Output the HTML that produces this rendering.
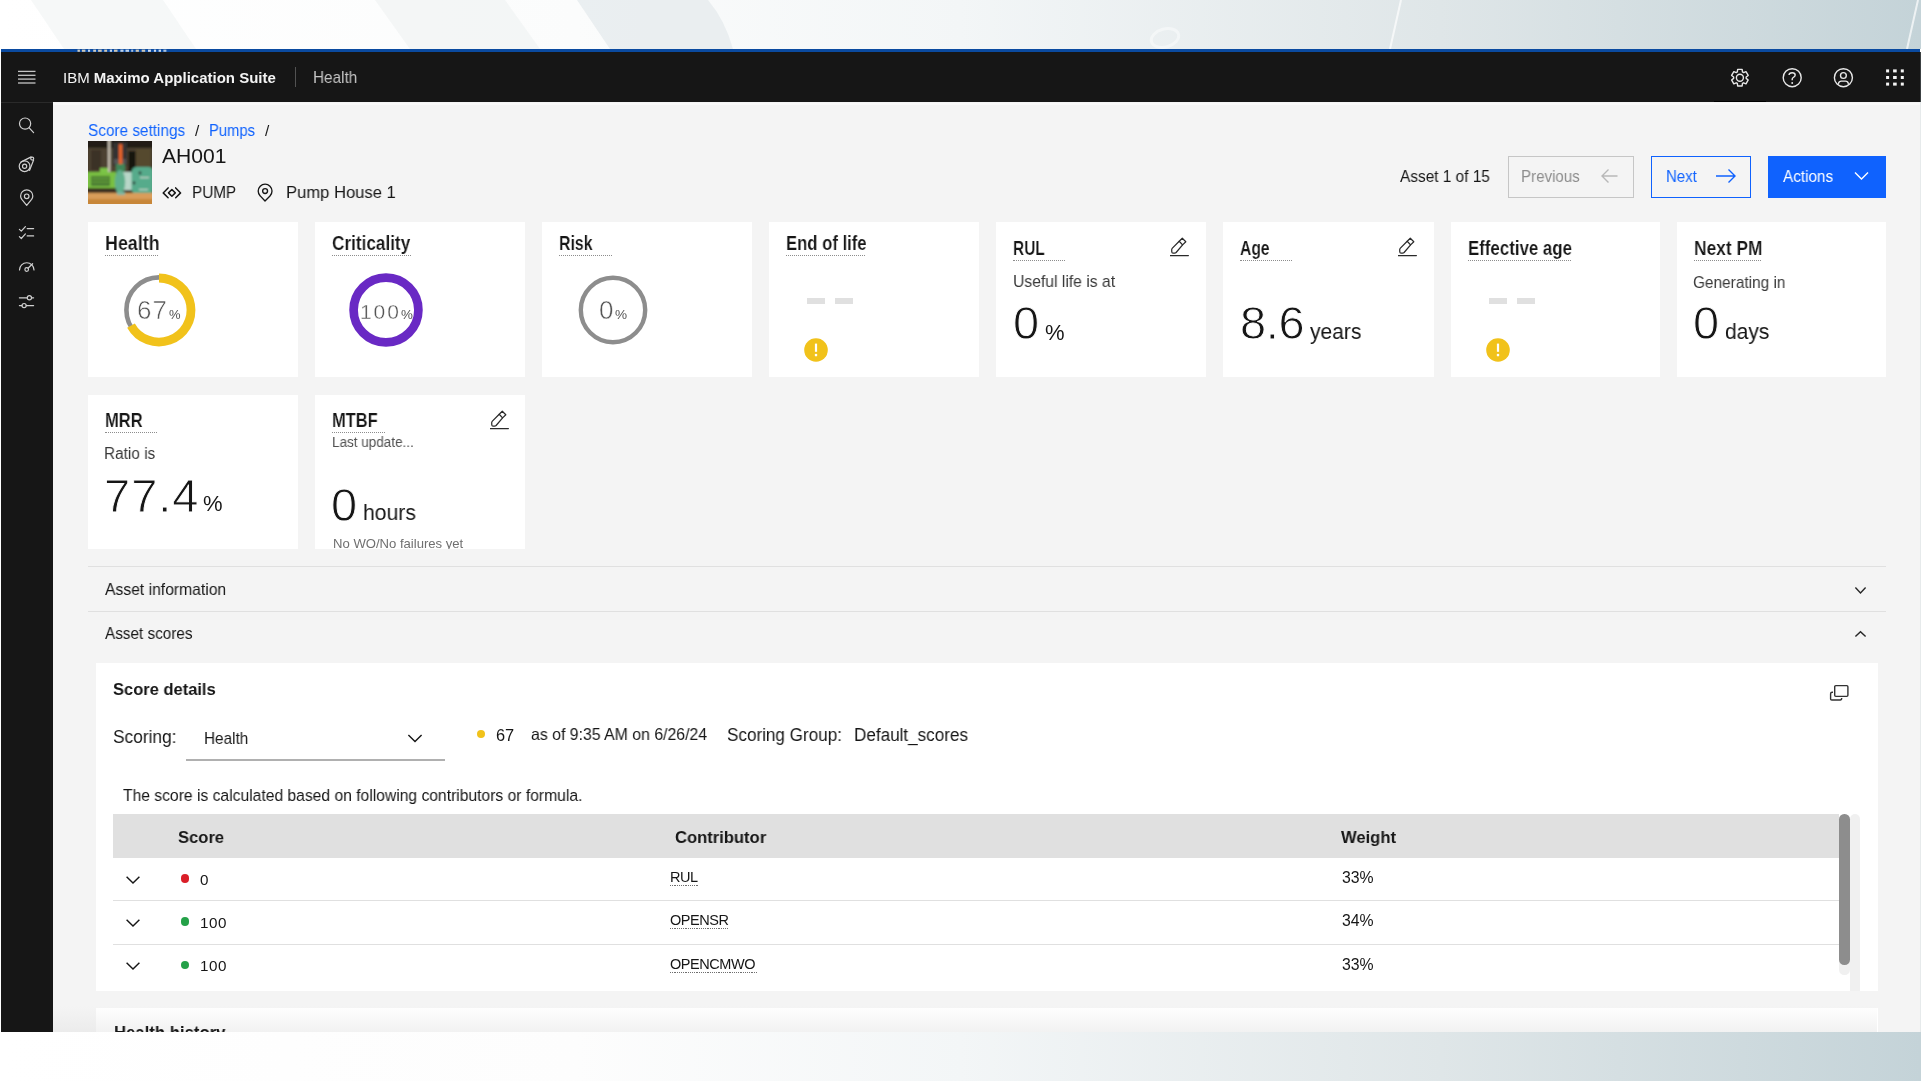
<!DOCTYPE html>
<html><head><meta charset="utf-8">
<style>
html,body{margin:0;padding:0;}
body{width:1921px;height:1081px;overflow:hidden;position:relative;background:#fff;font-family:"Liberation Sans", sans-serif;}
.t{position:absolute;line-height:1;white-space:pre;will-change:transform;}
.r{position:absolute;}
</style></head><body>
<svg class="r" style="left:0;top:0" width="1921" height="49" viewBox="0 0 1921 49">
<defs><linearGradient id="tg" x1="0" x2="1" y1="0" y2="0">
<stop offset="0" stop-color="#ffffff"/><stop offset="0.3" stop-color="#fbfcfc"/><stop offset="0.5" stop-color="#f3f6f7"/><stop offset="0.75" stop-color="#dfe6e8"/><stop offset="1" stop-color="#c4d3d8"/></linearGradient></defs>
<rect width="1921" height="49" fill="url(#tg)"/>
<polygon points="31,0 163,0 196,49 64,49" fill="#eef2f3" opacity="0.55"/>
<polygon points="375,0 505,0 540,49 410,49" fill="#eef1f2" opacity="0.6"/>
<path d="M577,0 L708,0 Q725,20 733,49 L610,49 Z" fill="#e6ebed" opacity="0.8"/>
<line x1="1401" y1="0" x2="1390" y2="49" stroke="#ffffff" stroke-width="2" opacity="0.7"/>
<line x1="1918" y1="0" x2="1907" y2="49" stroke="#ffffff" stroke-width="2" opacity="0.7"/>
<ellipse cx="1165" cy="38" rx="14" ry="9" fill="none" stroke="#ffffff" stroke-width="3" opacity="0.45" transform="rotate(-15 1165 38)"/>
</svg>
<div class="r" style="left:1px;top:49px;width:1919px;height:3px;background:#0a4aa0;"></div>
<svg class="r" style="left:0;top:49px" width="180" height="3"><rect x="77.5" y="0.6" width="2.4" height="2.2" fill="#f2e2c4" opacity="0.85"/><rect x="81.9" y="0.6" width="3.5" height="2.2" fill="#f0dcb8" opacity="0.85"/><rect x="88.0" y="0.6" width="2.1" height="2.2" fill="#dfeaf5" opacity="0.85"/><rect x="93.2" y="0.6" width="2.8" height="2.2" fill="#f2e2c4" opacity="0.85"/><rect x="98.1" y="0.6" width="3.6" height="2.2" fill="#f0dcb8" opacity="0.85"/><rect x="104.2" y="0.6" width="2.9" height="2.2" fill="#f0dcb8" opacity="0.85"/><rect x="109.8" y="0.6" width="2.2" height="2.2" fill="#e6eef6" opacity="0.85"/><rect x="114.0" y="0.6" width="3.5" height="2.2" fill="#f0dcb8" opacity="0.85"/><rect x="120.4" y="0.6" width="3.1" height="2.2" fill="#dfeaf5" opacity="0.85"/><rect x="125.5" y="0.6" width="3.5" height="2.2" fill="#dfeaf5" opacity="0.85"/><rect x="131.2" y="0.6" width="2.0" height="2.2" fill="#c8d6e6" opacity="0.85"/><rect x="135.7" y="0.6" width="3.2" height="2.2" fill="#f0dcb8" opacity="0.85"/><rect x="141.7" y="0.6" width="3.5" height="2.2" fill="#f0dcb8" opacity="0.85"/><rect x="148.0" y="0.6" width="2.9" height="2.2" fill="#f4f6f8" opacity="0.85"/><rect x="153.9" y="0.6" width="2.2" height="2.2" fill="#f4f6f8" opacity="0.85"/><rect x="158.6" y="0.6" width="2.4" height="2.2" fill="#e6eef6" opacity="0.85"/><rect x="163.4" y="0.6" width="3.0" height="2.2" fill="#c8d6e6" opacity="0.85"/></svg>
<div class="r" style="left:1px;top:52px;width:1919px;height:50px;background:#161616;"></div>
<div class="r" style="left:1px;top:102px;width:52.4px;height:930px;background:#161616;"></div>
<div class="r" style="left:1px;top:102px;width:52px;height:1px;background:#2a2a2a;"></div>
<div class="r" style="left:53.4px;top:102px;width:1866.6px;height:930px;background:#f4f4f4;"></div>
<div class="r" style="left:53px;top:103px;width:1867px;height:2px;background:#f9f9f9;"></div>
<div class="r" style="left:1920px;top:52px;width:1px;height:50px;background:#3c4143;"></div>
<div class="r" style="left:1920px;top:102px;width:1px;height:930px;background:#e6eaeb;"></div>
<svg class="r" style="left:0;top:52px" width="60" height="50"><g stroke="#c6c6c6" stroke-width="1.3"><line x1="18" y1="19.4" x2="35.5" y2="19.4"/><line x1="18" y1="23.3" x2="35.5" y2="23.3"/><line x1="18" y1="27.1" x2="35.5" y2="27.1"/><line x1="18" y1="31" x2="35.5" y2="31"/></g></svg>
<div class="t" style="left:63.4px;top:70.10px;font-size:15px;color:#f4f4f4">IBM <b style="font-weight:700">Maximo Application Suite</b></div>
<div class="r" style="left:295px;top:67px;width:1px;height:20px;background:#525252;"></div>
<div class="t" style="left:313.40px;top:69px;font-size:16.37px;color:#c6c6c6;font-weight:400;transform:scaleX(0.9346);transform-origin:0 0;">Health</div>
<svg class="r" style="left:1700px;top:52px" width="221" height="50"><g fill="none" stroke="#e8e8e8" stroke-width="1.4" stroke-linejoin="round"><path d="M37.34,19.94 L37.67,17.39 L42.13,17.39 L42.46,19.94 L43.60,20.60 L45.98,19.62 L48.21,23.47 L46.17,25.04 L46.17,26.36 L48.21,27.93 L45.98,31.78 L43.60,30.80 L42.46,31.46 L42.13,34.01 L37.67,34.01 L37.34,31.46 L36.20,30.80 L33.82,31.78 L31.59,27.93 L33.63,26.36 L33.63,25.04 L31.59,23.47 L33.82,19.62 L36.20,20.60Z"/><circle cx="39.9" cy="25.7" r="3.5"/><circle cx="92.2" cy="25.7" r="9.0"/><path d="M89.0,23.0 Q89.1,20.7 92.2,20.7 Q95.2,20.7 95.2,23.1 Q95.2,24.7 93.1,25.6 Q92.2,26.0 92.2,27.3 L92.2,28.2"/><circle cx="143.4" cy="25.7" r="9.0"/><circle cx="143.4" cy="23.5" r="2.9"/><path d="M138.2,32.4 L138.5,31.4 Q139.0,29.1 141.3,29.1 L145.5,29.1 Q147.8,29.1 148.3,31.4 L148.6,32.4"/></g><circle cx="92.2" cy="31.0" r="0.95" fill="#e8e8e8"/><g fill="#f4f4f4"><rect x="186.1" y="17.4" width="3" height="3"/><rect x="186.1" y="24.0" width="3" height="3"/><rect x="186.1" y="30.6" width="3" height="3"/><rect x="193.1" y="17.4" width="3.6" height="3"/><rect x="193.1" y="24.0" width="3.6" height="3"/><rect x="193.1" y="30.6" width="3.6" height="3"/><rect x="200.8" y="17.4" width="3" height="3"/><rect x="200.8" y="24.0" width="3" height="3"/><rect x="200.8" y="30.6" width="3" height="3"/></g></svg>
<div class="r" style="left:1714px;top:101px;width:52px;height:1px;background:#000000;"></div>
<svg class="r" style="left:0;top:102px" width="53" height="220"><g fill="none" stroke="#d0d0d0" stroke-width="1.2" stroke-linecap="round" stroke-linejoin="round"><circle cx="25.1" cy="21.6" r="5.6"/><line x1="29.2" y1="25.8" x2="33.6" y2="30.6"/><circle cx="24.6" cy="64.2" r="5.4"/><circle cx="24.6" cy="64.2" r="2.1"/><circle cx="32.2" cy="56.6" r="1.5"/><path d="M21.2,59.9 L31.2,54.9 M29.6,68.4 L33.6,58"/><path d="M26.7,103.3 L21.8,97.4 Q20.6,95.8 20.6,94 A6.1,6.1 0 0 1 32.8,94 Q32.8,95.8 31.6,97.4 Z"/><circle cx="26.7" cy="94.3" r="2.3"/><path d="M19.4,127.3 L21.3,129.2 L25.4,124.6 M19.4,134.6 L21.3,136.5 L25.4,131.9"/><line x1="27.2" y1="126.6" x2="33.6" y2="126.6"/><line x1="27.2" y1="133.9" x2="33.6" y2="133.9"/><path d="M19.5,168 A7.25,7.25 0 0 1 34,168"/><circle cx="26.7" cy="167.5" r="1.8"/><line x1="28" y1="166.2" x2="32.6" y2="161.7"/><line x1="19.4" y1="195.8" x2="27.2" y2="195.8"/><line x1="31.6" y1="195.8" x2="33.6" y2="195.8"/><circle cx="29.4" cy="195.8" r="2.1"/><line x1="19.4" y1="203.6" x2="21.9" y2="203.6"/><line x1="26.3" y1="203.6" x2="33.6" y2="203.6"/><circle cx="24.1" cy="203.6" r="2.1"/></g></svg>
<div class="t" style="left:88.00px;top:122px;font-size:16.42px;color:#0f62fe;font-weight:400;transform:scaleX(0.9346);transform-origin:0 0;">Score settings</div>
<div class="t" style="left:194.50px;top:123px;font-size:15.35px;color:#161616;font-weight:400;">/</div>
<div class="t" style="left:209.20px;top:123px;font-size:15.84px;color:#0f62fe;font-weight:400;transform:scaleX(0.9346);transform-origin:0 0;">Pumps</div>
<div class="t" style="left:265.30px;top:123px;font-size:15.35px;color:#161616;font-weight:400;">/</div>
<div class="t" style="left:162.30px;top:146px;font-size:20.05px;color:#161616;font-weight:400;transform:scaleX(1.0526);transform-origin:0 0;">AH001</div>
<svg class="r" style="left:87.8px;top:140.5px" width="64" height="63" viewBox="0 0 64 63"><defs><filter id="pb" x="0" y="0" width="1" height="1"><feGaussianBlur stdDeviation="0.9"/></filter><clipPath id="pc"><rect width="64" height="63"/></clipPath></defs><rect width="64" height="63" fill="#3b3020"/><g filter="url(#pb)" clip-path="url(#pc)"><rect x="-2" y="-2" width="68" height="67" fill="#3e3424"/><rect x="-2" y="-2" width="68" height="9" fill="#221d14"/><rect x="0" y="7" width="64" height="25" fill="#4d4330"/><rect x="3" y="9" width="10" height="20" fill="#3a3226"/><rect x="48" y="8" width="14" height="22" fill="#55492f"/><rect x="40.5" y="10" width="7" height="21" fill="#15120d"/><rect x="20" y="-2" width="2.4" height="33" fill="#c9c2b4"/><rect x="25" y="1.5" width="14" height="23" fill="#333333"/><rect x="26" y="18" width="12" height="5" fill="#555555"/><rect x="30.8" y="3.2" width="3.6" height="20" fill="#e9642b"/><rect x="28" y="23" width="9" height="9" fill="#3f8458"/><rect x="-2" y="31" width="30" height="17" fill="#79c043"/><rect x="3" y="35" width="19" height="10" fill="#4a7a30"/><rect x="4" y="37" width="17" height="1.2" fill="#6aa840"/><rect x="4" y="40.5" width="17" height="1.2" fill="#6aa840"/><rect x="12" y="27" width="8" height="5" fill="#7cc447"/><rect x="-2" y="47" width="68" height="5" fill="#3d3222"/><rect x="35" y="31" width="10" height="18" fill="#b8d6c8"/><ellipse cx="32" cy="41" rx="5.2" ry="12" fill="#5faf8c"/><rect x="43.5" y="26" width="22" height="27" rx="5" fill="#56ab8b"/><circle cx="52" cy="32" r="1.4" fill="#2a2a2a"/><circle cx="46" cy="42" r="1.4" fill="#2a2a2a"/><rect x="52" y="36" width="9" height="1.2" fill="#c9d8cc"/><rect x="51" y="48" width="9" height="1.2" fill="#c9d8cc"/><rect x="-2" y="52" width="68" height="6" fill="#d99d5a"/><rect x="-2" y="58" width="68" height="7" fill="#c78638"/><rect x="29" y="51" width="8" height="3" fill="#7fb5a0"/></g></svg>
<svg class="r" style="left:160px;top:182px" width="120" height="22"><g fill="none" stroke="#161616" stroke-width="1.4" stroke-linejoin="round"><path d="M8.1,5.9 L3.2,10.9 L8.1,15.8 M15.7,5.9 L20.6,10.9 L15.7,15.8" stroke-width="1.5" stroke-linecap="round"/><path d="M11.9,7.5 L15.3,10.9 L11.9,14.3 L8.5,10.9 Z" stroke-width="1.5"/><path d="M105,19.0 L100.2,13.9 A6.9,6.9 0 1 1 110.0,13.9 Z" stroke-width="1.35"/><circle cx="105.1" cy="9" r="2.45" stroke-width="1.35"/></g></svg>
<div class="t" style="left:192.40px;top:184px;font-size:16.37px;color:#161616;font-weight:400;transform:scaleX(0.9346);transform-origin:0 0;">PUMP</div>
<div class="t" style="left:286.20px;top:185px;font-size:16.93px;color:#161616;font-weight:400;transform:scaleX(0.9804);transform-origin:0 0;">Pump House 1</div>
<div class="t" style="left:1399.50px;top:168px;font-size:16.02px;color:#161616;font-weight:400;transform:scaleX(0.9615);transform-origin:0 0;">Asset 1 of 15</div>
<div class="r" style="left:1508px;top:156px;width:124px;height:40px;border:1px solid #c6c6c6;"></div>
<div class="t" style="left:1521.10px;top:168px;font-size:16.16px;color:#8d8d8d;font-weight:400;transform:scaleX(0.9346);transform-origin:0 0;">Previous</div>
<div class="r" style="left:1651px;top:156px;width:97.5px;height:40px;border:1.3px solid #0f62fe;"></div>
<div class="t" style="left:1665.90px;top:168px;font-size:16.05px;color:#0f62fe;font-weight:400;transform:scaleX(0.9346);transform-origin:0 0;">Next</div>
<div class="r" style="left:1767.7px;top:155.8px;width:118px;height:42px;background:#0f62fe;"></div>
<div class="t" style="left:1782.80px;top:168px;font-size:16.37px;color:#ffffff;font-weight:400;transform:scaleX(0.9346);transform-origin:0 0;">Actions</div>
<svg class="r" style="left:1595px;top:165px" width="280" height="24"><g fill="none" stroke-width="1.4"><path d="M7,11 L22.5,11 M13.5,4.5 L7,11 L13.5,17.5" stroke="#b8b8b8"/><path d="M121,11 L140,11 M133.5,4.5 L140,11 L133.5,17.5" stroke="#0f62fe"/><path d="M260,7.5 L266.5,14 L273,7.5" stroke="#ffffff"/></g></svg>
<div class="r" style="left:87.7px;top:222px;width:210.2px;height:155px;background:#ffffff;"></div>
<div class="r" style="left:315.2px;top:222px;width:209.7px;height:155px;background:#ffffff;"></div>
<div class="r" style="left:542.2px;top:222px;width:210.2px;height:155px;background:#ffffff;"></div>
<div class="r" style="left:768.5px;top:222px;width:210.2px;height:155px;background:#ffffff;"></div>
<div class="r" style="left:996px;top:222px;width:210px;height:155px;background:#ffffff;"></div>
<div class="r" style="left:1223px;top:222px;width:210.5px;height:155px;background:#ffffff;"></div>
<div class="r" style="left:1450.8px;top:222px;width:209.0px;height:155px;background:#ffffff;"></div>
<div class="r" style="left:1676.6px;top:222px;width:209.1px;height:155px;background:#ffffff;"></div>
<div class="r" style="left:87.7px;top:394.6px;width:210.2px;height:154.5px;background:#ffffff;"></div>
<div class="r" style="left:315.2px;top:394.6px;width:209.7px;height:154.5px;background:#ffffff;"></div>
<div class="t" style="left:104.80px;top:234px;font-size:19.6px;color:#161616;font-weight:700;transform:scaleX(0.91);transform-origin:0 0;-webkit-text-stroke:0.15px #fff;">Health</div>
<div class="r" style="left:104.8px;top:255px;width:53.1px;height:0;border-top:1px dotted #8d8d8d"></div>
<div class="t" style="left:332.30px;top:234px;font-size:19.6px;color:#161616;font-weight:700;transform:scaleX(0.876);transform-origin:0 0;-webkit-text-stroke:0.15px #fff;">Criticality</div>
<div class="r" style="left:332.3px;top:255px;width:78.4px;height:0;border-top:1px dotted #8d8d8d"></div>
<div class="t" style="left:559.30px;top:234px;font-size:19.6px;color:#161616;font-weight:700;transform:scaleX(0.81);transform-origin:0 0;-webkit-text-stroke:0.15px #fff;">Risk</div>
<div class="r" style="left:559.3px;top:255px;width:52.4px;height:0;border-top:1px dotted #8d8d8d"></div>
<div class="t" style="left:785.60px;top:234px;font-size:19.6px;color:#161616;font-weight:700;transform:scaleX(0.851);transform-origin:0 0;-webkit-text-stroke:0.15px #fff;">End of life</div>
<div class="r" style="left:785.6px;top:255px;width:79.9px;height:0;border-top:1px dotted #8d8d8d"></div>
<div class="t" style="left:1013.10px;top:239px;font-size:19.6px;color:#161616;font-weight:700;transform:scaleX(0.788);transform-origin:0 0;-webkit-text-stroke:0.15px #fff;">RUL</div>
<div class="r" style="left:1013.1px;top:260px;width:52.4px;height:0;border-top:1px dotted #8d8d8d"></div>
<div class="t" style="left:1240.10px;top:239px;font-size:19.6px;color:#161616;font-weight:700;transform:scaleX(0.798);transform-origin:0 0;-webkit-text-stroke:0.15px #fff;">Age</div>
<div class="r" style="left:1240.1px;top:260px;width:52.4px;height:0;border-top:1px dotted #8d8d8d"></div>
<div class="t" style="left:1467.90px;top:239px;font-size:19.6px;color:#161616;font-weight:700;transform:scaleX(0.86);transform-origin:0 0;-webkit-text-stroke:0.15px #fff;">Effective age</div>
<div class="r" style="left:1467.9px;top:260px;width:103.4px;height:0;border-top:1px dotted #8d8d8d"></div>
<div class="t" style="left:1693.70px;top:239px;font-size:19.6px;color:#161616;font-weight:700;transform:scaleX(0.885);transform-origin:0 0;-webkit-text-stroke:0.15px #fff;">Next PM</div>
<div class="r" style="left:1693.7px;top:260px;width:66.9px;height:0;border-top:1px dotted #8d8d8d"></div>
<svg class="r" style="left:1170.2px;top:237.0px" width="20" height="20" viewBox="0 0 20 20"><g fill="none" stroke="#2a2a2a" stroke-width="1.25" stroke-linejoin="round"><line x1="0.2" y1="18.6" x2="18.4" y2="18.6" stroke-linecap="round"/><path d="M9.2,4.3 L12.3,1.2 L15.8,4.7 L12.6,7.9 Z"/><path d="M9.2,4.3 L2.4,11.1 Q1.7,11.8 1.7,12.8 L1.8,15.0 Q1.9,16.1 3.0,16.1 L4.6,16.1 Q5.5,16.1 6.1,15.5 L12.6,7.9"/></g></svg>
<svg class="r" style="left:1397.7px;top:237.0px" width="20" height="20" viewBox="0 0 20 20"><g fill="none" stroke="#2a2a2a" stroke-width="1.25" stroke-linejoin="round"><line x1="0.2" y1="18.6" x2="18.4" y2="18.6" stroke-linecap="round"/><path d="M9.2,4.3 L12.3,1.2 L15.8,4.7 L12.6,7.9 Z"/><path d="M9.2,4.3 L2.4,11.1 Q1.7,11.8 1.7,12.8 L1.8,15.0 Q1.9,16.1 3.0,16.1 L4.6,16.1 Q5.5,16.1 6.1,15.5 L12.6,7.9"/></g></svg>
<svg class="r" style="left:119.0px;top:270.2px" width="80" height="80" viewBox="-40 -40 80 80"><circle r="32.6" fill="none" stroke="#8d8d8d" stroke-width="4.6"/><path d="M0,-32 A32,32 0 1 1 -27.99,15.51" fill="none" stroke="#f1c21b" stroke-width="8.8"/></svg>
<svg class="r" style="left:346.2px;top:270.2px" width="80" height="80" viewBox="-40 -40 80 80"><circle r="32.4" fill="none" stroke="#6929c4" stroke-width="8.7"/></svg>
<svg class="r" style="left:573.2px;top:270.2px" width="80" height="80" viewBox="-40 -40 80 80"><circle r="32.2" fill="none" stroke="#8d8d8d" stroke-width="4.4"/></svg>
<div class="t" style="left:136.60px;top:297px;font-size:26px;color:#555555;font-weight:400;-webkit-text-stroke:0.6px #fff;letter-spacing:1.0px">67</div>
<div class="t" style="left:168.50px;top:308px;font-size:13px;color:#525252;font-weight:400;">%</div>
<div class="t" style="left:360.40px;top:301px;font-size:21px;color:#555555;font-weight:400;-webkit-text-stroke:0.35px #fff;letter-spacing:1.9px">100</div>
<div class="t" style="left:400.50px;top:308px;font-size:13.4px;color:#555555;font-weight:400;">%</div>
<div class="t" style="left:599.20px;top:297px;font-size:26px;color:#555555;font-weight:400;-webkit-text-stroke:0.5px #fff;">0</div>
<div class="t" style="left:614.80px;top:308px;font-size:13.6px;color:#555555;font-weight:400;">%</div>
<div class="r" style="left:807.1px;top:298px;width:18px;height:6px;background:#e0e0e0;"></div>
<div class="r" style="left:835.0px;top:298px;width:18px;height:6px;background:#e0e0e0;"></div>
<svg class="r" style="left:803.6px;top:337.8px" width="24" height="24" viewBox="0 0 24 24"><circle cx="12" cy="12" r="11.8" fill="#f1c21b"/><rect x="10.9" y="5.6" width="2.2" height="8.2" fill="#ffffff"/><circle cx="12" cy="17.1" r="1.3" fill="#ffffff"/></svg>
<div class="r" style="left:1489.4px;top:298px;width:18px;height:6px;background:#e0e0e0;"></div>
<div class="r" style="left:1517.3px;top:298px;width:18px;height:6px;background:#e0e0e0;"></div>
<svg class="r" style="left:1485.9px;top:337.8px" width="24" height="24" viewBox="0 0 24 24"><circle cx="12" cy="12" r="11.8" fill="#f1c21b"/><rect x="10.9" y="5.6" width="2.2" height="8.2" fill="#ffffff"/><circle cx="12" cy="17.1" r="1.3" fill="#ffffff"/></svg>
<div class="t" style="left:1012.50px;top:273px;font-size:16.33px;color:#393939;font-weight:400;transform:scaleX(0.9615);transform-origin:0 0;">Useful life is at</div>
<div class="t" style="left:1013.00px;top:299px;font-size:47px;color:#161616;font-weight:400;-webkit-text-stroke:0.9px #fff;">0</div>
<div class="t" style="left:1045.00px;top:322px;font-size:22px;color:#161616;font-weight:400;">%</div>
<div class="t" style="left:1240.30px;top:299px;font-size:47px;color:#161616;font-weight:400;-webkit-text-stroke:0.9px #fff;letter-spacing:-0.4px">8.6</div>
<div class="t" style="left:1310.40px;top:321px;font-size:22.05px;color:#161616;font-weight:400;transform:scaleX(0.9524);transform-origin:0 0;">years</div>
<div class="t" style="left:1693.40px;top:274px;font-size:16.17px;color:#393939;font-weight:400;transform:scaleX(0.9524);transform-origin:0 0;">Generating in</div>
<div class="t" style="left:1692.80px;top:299px;font-size:47px;color:#161616;font-weight:400;-webkit-text-stroke:0.9px #fff;">0</div>
<div class="t" style="left:1725.40px;top:321px;font-size:22.05px;color:#161616;font-weight:400;transform:scaleX(0.9524);transform-origin:0 0;">days</div>
<div class="t" style="left:104.80px;top:411px;font-size:19.6px;color:#161616;font-weight:700;transform:scaleX(0.843);transform-origin:0 0;-webkit-text-stroke:0.15px #fff;">MRR</div>
<div class="r" style="left:104.8px;top:432.4px;width:52.4px;height:0;border-top:1px dotted #8d8d8d"></div>
<div class="t" style="left:104.10px;top:446px;font-size:16.63px;color:#393939;font-weight:400;transform:scaleX(0.9259);transform-origin:0 0;">Ratio is</div>
<div class="t" style="left:104.40px;top:472px;font-size:47px;color:#161616;font-weight:400;-webkit-text-stroke:0.9px #fff;letter-spacing:1.0px">77.4</div>
<div class="t" style="left:203.00px;top:493px;font-size:22px;color:#161616;font-weight:400;">%</div>
<div class="t" style="left:332.30px;top:411px;font-size:19.6px;color:#161616;font-weight:700;transform:scaleX(0.839);transform-origin:0 0;-webkit-text-stroke:0.15px #fff;">MTBF</div>
<div class="r" style="left:332.3px;top:432.4px;width:52.4px;height:0;border-top:1px dotted #8d8d8d"></div>
<svg class="r" style="left:489.6px;top:409.5px" width="20" height="20" viewBox="0 0 20 20"><g fill="none" stroke="#2a2a2a" stroke-width="1.25" stroke-linejoin="round"><line x1="0.2" y1="18.6" x2="18.4" y2="18.6" stroke-linecap="round"/><path d="M9.2,4.3 L12.3,1.2 L15.8,4.7 L12.6,7.9 Z"/><path d="M9.2,4.3 L2.4,11.1 Q1.7,11.8 1.7,12.8 L1.8,15.0 Q1.9,16.1 3.0,16.1 L4.6,16.1 Q5.5,16.1 6.1,15.5 L12.6,7.9"/></g></svg>
<div class="t" style="left:332.40px;top:435px;font-size:14.18px;color:#525252;font-weight:400;transform:scaleX(0.9524);transform-origin:0 0;">Last update...</div>
<div class="t" style="left:331.10px;top:481px;font-size:47px;color:#161616;font-weight:400;-webkit-text-stroke:0.9px #fff;">0</div>
<div class="t" style="left:363.20px;top:502px;font-size:22.26px;color:#161616;font-weight:400;transform:scaleX(0.9524);transform-origin:0 0;">hours</div>
<div class="r" style="left:315px;top:394.6px;width:210px;height:154.5px;overflow:hidden"><div class="t" style="left:17.6px;top:142px;font-size:13.1px;color:#6f6f6f">No WO/No failures yet</div></div>
<div class="r" style="left:88px;top:566px;width:1798px;height:1px;background:#e0e0e0;"></div>
<div class="t" style="left:105.00px;top:581px;font-size:16.48px;color:#161616;font-weight:400;transform:scaleX(0.9524);transform-origin:0 0;">Asset information</div>
<div class="r" style="left:88px;top:611px;width:1798px;height:1px;background:#e0e0e0;"></div>
<div class="t" style="left:105.00px;top:625px;font-size:16.37px;color:#161616;font-weight:400;transform:scaleX(0.9346);transform-origin:0 0;">Asset scores</div>
<svg class="r" style="left:1850px;top:580px" width="22" height="64"><g fill="none" stroke="#262626" stroke-width="1.4"><path d="M5.4,7.6 L10.5,12.9 L15.6,7.6"/><path d="M5.4,56.6 L10.5,51.7 L15.6,56.6"/></g></svg>
<div class="r" style="left:96.4px;top:663.2px;width:1781.2px;height:327.6px;background:#ffffff;"></div>
<div class="t" style="left:112.90px;top:681px;font-size:17.32px;color:#161616;font-weight:700;transform:scaleX(0.9524);transform-origin:0 0;">Score details</div>
<svg class="r" style="left:1828px;top:683px" width="22" height="20"><g fill="none" stroke="#333333" stroke-width="1.4" stroke-linejoin="round"><rect x="6.7" y="2.6" width="13.2" height="10.8" rx="1.1"/><path d="M5.0,9.2 L4.2,9.2 Q2.6,9.2 2.6,10.8 L2.6,15.9 Q2.6,17.0 3.8,17.0 L12.2,17.0 Q13.7,17.0 13.7,15.0"/></g></svg>
<div class="t" style="left:112.60px;top:728px;font-size:17.99px;color:#161616;font-weight:400;transform:scaleX(0.9615);transform-origin:0 0;">Scoring:</div>
<div class="t" style="left:204.10px;top:730px;font-size:16.37px;color:#161616;font-weight:400;transform:scaleX(0.9346);transform-origin:0 0;">Health</div>
<svg class="r" style="left:400px;top:728px" width="30" height="20"><path d="M8.4,7 L15,13.6 L21.6,7" fill="none" stroke="#161616" stroke-width="1.4"/></svg>
<div class="r" style="left:186.4px;top:759px;width:258.5px;height:2px;background:#b0b0b0;"></div>
<div class="r" style="left:476.5px;top:729.7px;width:8.6px;height:8.6px;border-radius:50%;background:#f1c21b"></div>
<div class="t" style="left:496.20px;top:727px;font-size:16.4px;color:#161616;font-weight:400;">67</div>
<div class="t" style="left:531.20px;top:726px;font-size:16.48px;color:#161616;font-weight:400;transform:scaleX(0.9615);transform-origin:0 0;">as of 9:35 AM on 6/26/24</div>
<div class="t" style="left:727.40px;top:727px;font-size:17.96px;color:#161616;font-weight:400;transform:scaleX(0.9524);transform-origin:0 0;">Scoring Group:</div>
<div class="t" style="left:854.30px;top:727px;font-size:17.96px;color:#161616;font-weight:400;transform:scaleX(0.9524);transform-origin:0 0;">Default_scores</div>
<div class="t" style="left:122.90px;top:787px;font-size:16.3px;color:#161616;font-weight:400;transform:scaleX(0.9615);transform-origin:0 0;">The score is calculated based on following contributors or formula.</div>
<div class="r" style="left:113.1px;top:814px;width:1726px;height:44.4px;background:#e0e0e0;"></div>
<div class="t" style="left:178.40px;top:829px;font-size:17.26px;color:#161616;font-weight:700;transform:scaleX(0.9615);transform-origin:0 0;">Score</div>
<div class="t" style="left:675.20px;top:829px;font-size:17.26px;color:#161616;font-weight:700;transform:scaleX(0.9615);transform-origin:0 0;">Contributor</div>
<div class="t" style="left:1341.40px;top:829px;font-size:17.26px;color:#161616;font-weight:700;transform:scaleX(0.9615);transform-origin:0 0;">Weight</div>
<svg class="r" style="left:120px;top:871.5px" width="26" height="16"><path d="M6.6,4.7 L13,11.0 L19.4,4.7" fill="none" stroke="#161616" stroke-width="1.45"/></svg>
<div class="r" style="left:180.7px;top:874.0px;width:8.8px;height:8.8px;border-radius:50%;background:#da1e28"></div>
<div class="t" style="left:200.30px;top:872px;font-size:15.2px;color:#161616;font-weight:400;letter-spacing:0.5px">0</div>
<div class="t" style="left:670.30px;top:870px;font-size:14.5px;color:#161616;font-weight:400;letter-spacing:-0.45px">RUL</div>
<div class="r" style="left:670.3px;top:885.3px;width:27.4px;height:1px;background:repeating-linear-gradient(90deg,#6f6f6f 0 1.2px,transparent 1.2px 2.2px)"></div>
<div class="t" style="left:1342.40px;top:870px;font-size:15.8px;color:#161616;font-weight:400;">33%</div>
<svg class="r" style="left:120px;top:914.5px" width="26" height="16"><path d="M6.6,4.7 L13,11.0 L19.4,4.7" fill="none" stroke="#161616" stroke-width="1.45"/></svg>
<div class="r" style="left:180.7px;top:917.0px;width:8.8px;height:8.8px;border-radius:50%;background:#24a148"></div>
<div class="t" style="left:200.30px;top:915px;font-size:15.2px;color:#161616;font-weight:400;letter-spacing:0.5px">100</div>
<div class="t" style="left:670.30px;top:913px;font-size:14.5px;color:#161616;font-weight:400;letter-spacing:-0.45px">OPENSR</div>
<div class="r" style="left:670.3px;top:928.3px;width:58px;height:1px;background:repeating-linear-gradient(90deg,#6f6f6f 0 1.2px,transparent 1.2px 2.2px)"></div>
<div class="t" style="left:1342.40px;top:913px;font-size:15.8px;color:#161616;font-weight:400;">34%</div>
<svg class="r" style="left:120px;top:957.9px" width="26" height="16"><path d="M6.6,4.7 L13,11.0 L19.4,4.7" fill="none" stroke="#161616" stroke-width="1.45"/></svg>
<div class="r" style="left:180.7px;top:960.5px;width:8.8px;height:8.8px;border-radius:50%;background:#24a148"></div>
<div class="t" style="left:200.30px;top:958px;font-size:15.2px;color:#161616;font-weight:400;letter-spacing:0.5px">100</div>
<div class="t" style="left:670.30px;top:957px;font-size:14.5px;color:#161616;font-weight:400;letter-spacing:-0.45px">OPENCMWO</div>
<div class="r" style="left:670.3px;top:971.7px;width:86.5px;height:1px;background:repeating-linear-gradient(90deg,#6f6f6f 0 1.2px,transparent 1.2px 2.2px)"></div>
<div class="t" style="left:1342.40px;top:957px;font-size:15.8px;color:#161616;font-weight:400;">33%</div>
<div class="r" style="left:113.1px;top:900px;width:1726px;height:1px;background:#e0e0e0;"></div>
<div class="r" style="left:113.1px;top:944px;width:1726px;height:1px;background:#e0e0e0;"></div>
<div class="r" style="left:1850px;top:813.6px;width:10.2px;height:177.4px;border-radius:5px 5px 0 0;background:#f0f0f0"></div>
<div class="r" style="left:1839.1px;top:813.6px;width:10.6px;height:161px;border-radius:5.3px;background:#f0f0f0"></div>
<div class="r" style="left:1839.1px;top:813.6px;width:10.6px;height:151.3px;border-radius:5.3px;background:#8d8d8d"></div>
<div class="r" style="left:96.4px;top:1007.8px;width:1781.2px;height:24.2px;background:#ffffff;"></div>
<div class="r" style="left:53.4px;top:1006px;width:1824px;height:26px;background:linear-gradient(to bottom, rgba(240,240,240,0) 0%, rgba(225,225,225,0.45) 100%)"></div>
<div class="t" style="left:114.30px;top:1025px;font-size:17.7px;color:#161616;font-weight:700;transform:scaleX(0.945);transform-origin:0 0;">Health history</div>
<svg class="r" style="left:0;top:1032px" width="1921" height="49" viewBox="0 0 1921 49">
<defs><linearGradient id="bg2" x1="0" x2="1" y1="0" y2="0">
<stop offset="0" stop-color="#ffffff"/><stop offset="0.3" stop-color="#fdfdfd"/><stop offset="0.5" stop-color="#f3f6f7"/><stop offset="0.75" stop-color="#dfe6e8"/><stop offset="1" stop-color="#c4d3d8"/></linearGradient></defs>
<rect width="1921" height="49" fill="url(#bg2)"/></svg>
</body></html>
